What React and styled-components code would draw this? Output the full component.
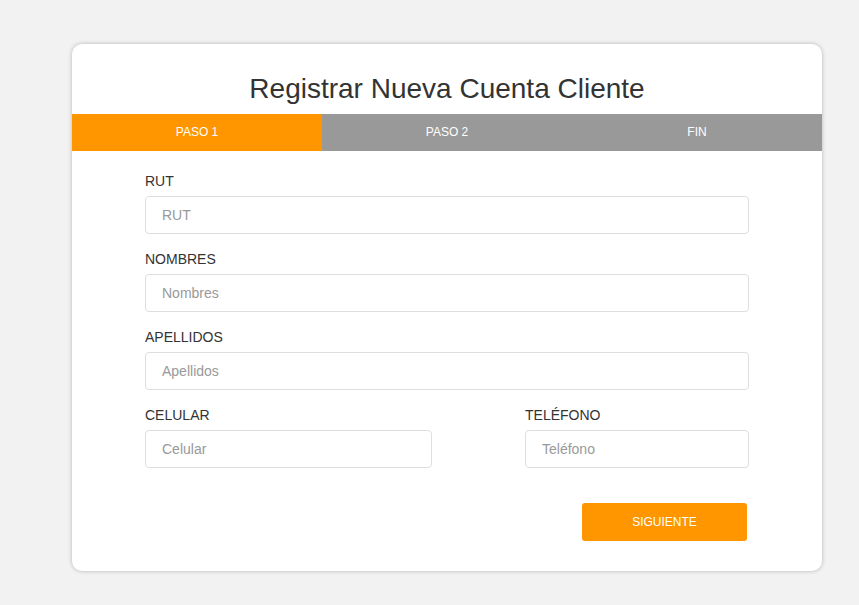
import React from 'react';
import styled, { createGlobalStyle } from 'styled-components';

const GlobalStyle = createGlobalStyle`
  body {
    margin: 0;
    background: #f2f2f2;
    font-family: Arial, "Liberation Sans", sans-serif;
  }
`;

const Page = styled.div`
  padding: 44px 0 34px 72px;
`;

const Card = styled.div`
  width: 750px;
  background: #fff;
  border-radius: 10px;
  box-shadow: 0 0 4px rgba(0, 0, 0, 0.25);
  overflow: hidden;
`;

const Title = styled.h1`
  margin: 0;
  padding: 29px 0 9px;
  text-align: center;
  font: normal 28px "Liberation Sans", Arial, sans-serif;
  color: #333;
  line-height: 32px;
`;

const Steps = styled.div`
  display: grid;
  grid-template-columns: repeat(3, 1fr);
`;

const Step = styled.div`
  height: 37px;
  text-align: center;
  font: normal 12px "Liberation Sans", Arial, sans-serif;
  line-height: 37px;
  color: #fff;
  background: ${p => (p.$active ? '#ff9600' : '#999999')};
`;

const Form = styled.form`
  padding: 22px 73px 30px;
  display: flex;
  flex-direction: column;
  gap: 17px;
`;

const Field = styled.div`
  display: flex;
  flex-direction: column;
  gap: 7px;
`;

const Row = styled.div`
  display: grid;
  grid-template-columns: 287px 224px;
  justify-content: space-between;
`;

const Label = styled.label`
  font: normal 14px "Liberation Sans", Arial, sans-serif;
  color: #333;
  line-height: 16px;
`;

const Input = styled.input`
  box-sizing: border-box;
  width: 100%;
  height: 38px;
  padding: 0 16px;
  border: 1px solid #dedede;
  border-radius: 4px;
  font: normal 14px "Liberation Sans", Arial, sans-serif;
  color: #333;
  outline: none;
  &::placeholder {
    color: #999;
  }
`;

const Actions = styled.div`
  display: flex;
  justify-content: flex-end;
  padding: 18px 2px 0 0;
`;

const Button = styled.button`
  width: 165px;
  height: 38px;
  border: none;
  border-radius: 3px;
  background: #ff9600;
  color: #fff;
  font: normal 12px "Liberation Sans", Arial, sans-serif;
  cursor: pointer;
`;

const steps = ['PASO 1', 'PASO 2', 'FIN'];

export default function App() {
  return (
    <>
      <GlobalStyle />
      <Page>
        <Card>
          <Title>Registrar Nueva Cuenta Cliente</Title>
          <Steps>
            {steps.map((s, i) => (
              <Step key={s} $active={i === 0}>{s}</Step>
            ))}
          </Steps>
          <Form onSubmit={e => e.preventDefault()}>
            <Field>
              <Label>RUT</Label>
              <Input placeholder="RUT" />
            </Field>
            <Field>
              <Label>NOMBRES</Label>
              <Input placeholder="Nombres" />
            </Field>
            <Field>
              <Label>APELLIDOS</Label>
              <Input placeholder="Apellidos" />
            </Field>
            <Row>
              <Field>
                <Label>CELULAR</Label>
                <Input placeholder="Celular" />
              </Field>
              <Field>
                <Label>TELÉFONO</Label>
                <Input placeholder="Teléfono" />
              </Field>
            </Row>
            <Actions>
              <Button type="submit">SIGUIENTE</Button>
            </Actions>
          </Form>
        </Card>
      </Page>
    </>
  );
}
